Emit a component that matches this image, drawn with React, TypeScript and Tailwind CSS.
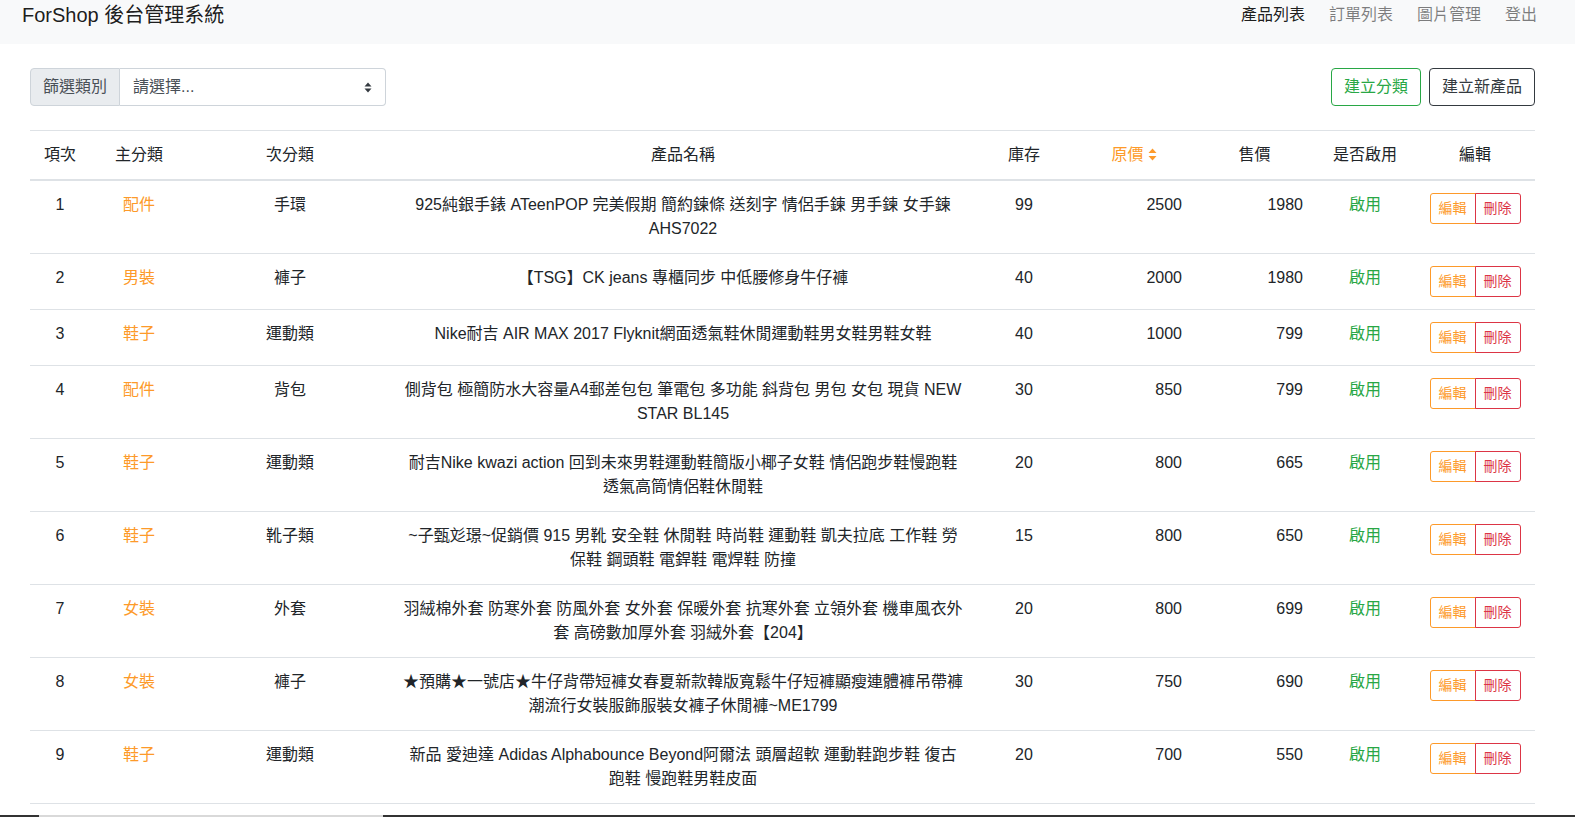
import React from "react";

const rows = [
  { id: 1, main: "配件", sub: "手環", name: "925純銀手錶 ATeenPOP 完美假期 簡約鍊條 送刻字 情侶手鍊 男手鍊 女手鍊 AHS7022", stock: 99, price: 2500, sale: 1980 },
  { id: 2, main: "男裝", sub: "褲子", name: "【TSG】CK jeans 專櫃同步 中低腰修身牛仔褲", stock: 40, price: 2000, sale: 1980 },
  { id: 3, main: "鞋子", sub: "運動類", name: "Nike耐吉 AIR MAX 2017 Flyknit網面透氣鞋休閒運動鞋男女鞋男鞋女鞋", stock: 40, price: 1000, sale: 799 },
  { id: 4, main: "配件", sub: "背包", name: "側背包 極簡防水大容量A4郵差包包 筆電包 多功能 斜背包 男包 女包 現貨 NEW STAR BL145", stock: 30, price: 850, sale: 799 },
  { id: 5, main: "鞋子", sub: "運動類", name: "耐吉Nike kwazi action 回到未來男鞋運動鞋簡版小椰子女鞋 情侶跑步鞋慢跑鞋 透氣高筒情侶鞋休閒鞋", stock: 20, price: 800, sale: 665 },
  { id: 6, main: "鞋子", sub: "靴子類", name: "~子甄彣璟~促銷價 915 男靴 安全鞋 休閒鞋 時尚鞋 運動鞋 凱夫拉底 工作鞋 勞保鞋 鋼頭鞋 電銲鞋 電焊鞋 防撞", stock: 15, price: 800, sale: 650 },
  { id: 7, main: "女裝", sub: "外套", name: "羽絨棉外套 防寒外套 防風外套 女外套 保暖外套 抗寒外套 立領外套 機車風衣外套 高磅數加厚外套 羽絨外套【204】", stock: 20, price: 800, sale: 699 },
  { id: 8, main: "女裝", sub: "褲子", name: "★預購★一號店★牛仔背帶短褲女春夏新款韓版寬鬆牛仔短褲顯瘦連體褲吊帶褲潮流行女裝服飾服裝女褲子休閒褲~ME1799", stock: 30, price: 750, sale: 690 },
  { id: 9, main: "鞋子", sub: "運動類", name: "新品 愛迪達 Adidas Alphabounce Beyond阿爾法 頭層超軟 運動鞋跑步鞋 復古跑鞋 慢跑鞋男鞋皮面", stock: 20, price: 700, sale: 550 },
];

function SortIcon() {
  return (
    <svg width="9" height="13" viewBox="0 0 9 13" className="inline-block ml-[4px] align-[-1px]">
      <path d="M4.5 0.5 L8.5 5 L0.5 5 Z" fill="#fd9a2a" />
      <path d="M4.5 12.5 L8.5 8 L0.5 8 Z" fill="#fd9a2a" />
    </svg>
  );
}

function SelectArrow() {
  return (
    <svg width="8" height="11" viewBox="0 0 8 11">
      <path d="M4 0.5 L7.5 4.5 L0.5 4.5 Z" fill="#343a40" />
      <path d="M4 10.5 L7.5 6.5 L0.5 6.5 Z" fill="#343a40" />
    </svg>
  );
}

export default function App() {
  return (
    <div
      className="h-[817px] overflow-hidden bg-white text-[#212529] text-[16px] leading-[24px]"
      style={{ fontFamily: '"Liberation Sans", "Noto Sans CJK TC", sans-serif' }}
    >
      {/* Navbar */}
      <nav className="h-[44px] bg-[#f8f9fa] flex items-start justify-between pl-[22px] pr-[26px]">
        <div className="text-[20px] leading-[30px] text-black/90">ForShop 後台管理系統</div>
        <ul className="flex mt-[3px]">
          <li className="px-[12px] text-black/90">產品列表</li>
          <li className="px-[12px] text-black/50">訂單列表</li>
          <li className="px-[12px] text-black/50">圖片管理</li>
          <li className="px-[12px] text-black/50">登出</li>
        </ul>
      </nav>

      <main className="pl-[30px] pr-[40px]">
        {/* Toolbar */}
        <div className="flex items-center justify-between mt-[24px]">
          <div className="flex h-[38px] w-[356px]">
            <div className="flex items-center px-[12px] bg-[#e9ecef] border border-[#ced4da] rounded-l-[4px] text-[#495057]">
              篩選類別
            </div>
            <div className="flex flex-1 items-center justify-between pl-[13px] pr-[13px] border border-l-0 border-[#ced4da] rounded-r-[4px] text-[#495057]">
              <span>請選擇...</span>
              <SelectArrow />
            </div>
          </div>
          <div className="flex gap-[8px]">
            <button className="h-[38px] px-[12px] border border-[#28a745] text-[#28a745] rounded-[4px]">建立分類</button>
            <button className="h-[38px] px-[12px] border border-[#343a40] text-[#343a40] rounded-[4px]">建立新產品</button>
          </div>
        </div>

        {/* Table */}
        <table className="w-[1505px] table-fixed border-collapse mt-[24px]">
          <colgroup>
            <col className="w-[60px]" />
            <col className="w-[98px]" />
            <col className="w-[204px]" />
            <col className="w-[582px]" />
            <col className="w-[100px]" />
            <col className="w-[120px]" />
            <col className="w-[121px]" />
            <col className="w-[100px]" />
            <col className="w-[120px]" />
          </colgroup>
          <thead>
            <tr className="border-t border-[#dee2e6] border-b-2 border-b-[#dee2e6]">
              <th className="p-[12px] font-normal text-center">項次</th>
              <th className="p-[12px] font-normal text-center">主分類</th>
              <th className="p-[12px] font-normal text-center">次分類</th>
              <th className="p-[12px] font-normal text-center">產品名稱</th>
              <th className="p-[12px] font-normal text-center">庫存</th>
              <th className="p-[12px] font-normal text-center text-[#fd9a2a]">
                原價
                <SortIcon />
              </th>
              <th className="p-[12px] font-normal text-center">售價</th>
              <th className="p-[12px] font-normal text-center">是否啟用</th>
              <th className="p-[12px] font-normal text-center">編輯</th>
            </tr>
          </thead>
          <tbody>
            {rows.map((r) => (
              <tr key={r.id} className="border-t border-[#dee2e6] align-top">
                <td className="p-[12px] text-center">{r.id}</td>
                <td className="p-[12px] text-center text-[#fd9a2a]">{r.main}</td>
                <td className="p-[12px] text-center">{r.sub}</td>
                <td className="py-[12px] px-[10.75px] text-center">{r.name}</td>
                <td className="p-[12px] text-center">{r.stock}</td>
                <td className="p-[12px] text-right">{r.price}</td>
                <td className="p-[12px] text-right">{r.sale}</td>
                <td className="p-[12px] text-center text-[#28a745]">啟用</td>
                <td className="p-[12px] text-center">
                  <div className="inline-flex text-[14px] leading-[21px]">
                    <button className="px-[8px] py-[4px] border border-[#fd9a2a] text-[#fd9a2a] rounded-l-[3px]">編輯</button>
                    <button className="px-[8px] py-[4px] border border-[#dc3545] text-[#dc3545] rounded-r-[3px] -ml-px">刪除</button>
                  </div>
                </td>
              </tr>
            ))}
            <tr className="border-t border-[#dee2e6]">
              <td colSpan={9} className="h-[20px]"></td>
            </tr>
          </tbody>
        </table>
      </main>

      <div className="fixed bottom-0 left-0 right-0 h-[2px] bg-[#333] flex">
        <div className="ml-[39px] w-[344px] bg-[#d9d9d9]"></div>
      </div>
    </div>
  );
}
